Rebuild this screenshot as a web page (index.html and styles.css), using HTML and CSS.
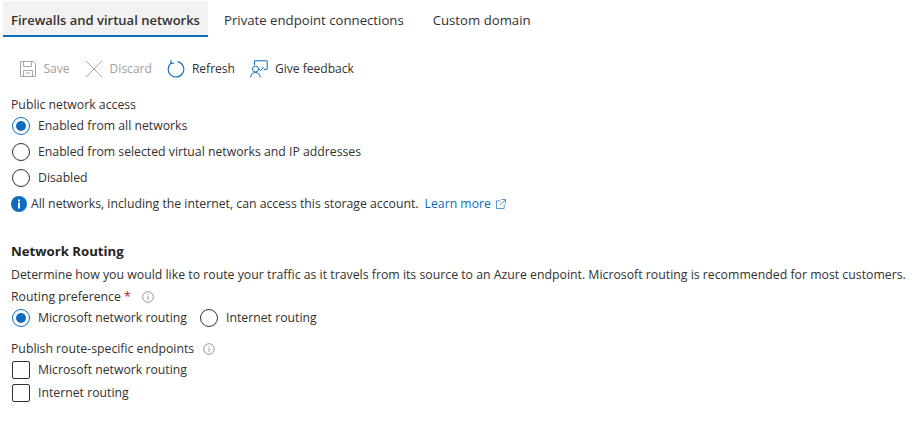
FILE: index.html
```html
<!DOCTYPE html>
<html lang="en">
<head>
<meta charset="utf-8">
<title>Networking</title>
<link rel="stylesheet" href="styles.css">
</head>
<body>
<nav class="tabs">
  <a class="tab active">Firewalls and virtual networks</a>
  <a class="tab">Private endpoint connections</a>
  <a class="tab">Custom domain</a>
</nav>
<div class="toolbar">
  <span class="tool disabled">
    <svg class="tool-icon" viewBox="0 0 18 18" fill="none" stroke="#a6a6a6" stroke-width="1"><path d="M1.500 1.500h13l2 2v13h-15z"/><path d="M4.500 1.500v5h8v-5M4.500 16.500v-6h9v6M7 13h4"/></svg>
    <span>Save</span>
  </span>
  <span class="tool disabled">
    <svg class="tool-icon" viewBox="0 0 18 18" fill="none" stroke="#a6a6a6" stroke-width="1"><path d="M1 1l16 16M17 1L1 17"/></svg>
    <span>Discard</span>
  </span>
  <span class="tool">
    <svg class="tool-icon" viewBox="0 0 18 18" fill="none" stroke="#0f6cbd" stroke-width="1.100"><path d="M4.800 2.600A7.800 7.800 0 1 0 10.800 1.600"/><path d="M4 0v3.300h3.300"/></svg>
    <span>Refresh</span>
  </span>
  <span class="tool">
    <svg class="tool-icon" viewBox="0 0 18 18" fill="none" stroke="#0f6cbd" stroke-width="1"><path d="M4.500 5V.8h12.700v8.600h-3.500"/><path d="M9 9l1.800 1.500 2.700-3.500"/><circle cx="5.500" cy="9" r="3"/><path d="M.8 17.500c0-3.200 2-5 4.700-5s4.700 1.800 4.700 5"/></svg>
    <span>Give feedback</span>
  </span>
</div>
<section class="form-group">
  <div class="label">Public network access</div>
  <label class="option"><span class="radio checked"></span><span>Enabled from all networks</span></label>
  <label class="option"><span class="radio"></span><span>Enabled from selected virtual networks and IP addresses</span></label>
  <label class="option"><span class="radio"></span><span>Disabled</span></label>
  <div class="info">
    <svg class="info-icon" viewBox="0 0 16 16"><circle cx="8" cy="8" r="8" fill="#0f6cbd"/><rect x="7" y="6.500" width="2" height="6" fill="#fff"/><rect x="7" y="3.500" width="2" height="2" fill="#fff"/></svg>
    <span>All networks, including the internet, can access this storage account.</span>
    <a class="link"><span>Learn more</span><svg class="ext-icon" viewBox="0 0 10 10" fill="none" stroke="#0f6cbd" stroke-width=".7"><path d="M4.500 1.800H.5v7.700h7.700V5.500M5.500.5h4v4M9.500.5L4 6"/></svg></a>
  </div>
</section>
<section class="routing">
  <h2>Network Routing</h2>
  <p>Determine how you would like to route your traffic as it travels from its source to an Azure endpoint. Microsoft routing is recommended for most customers.</p>
  <div class="label pref">Routing preference <span class="req">*</span>
    <svg class="help" viewBox="0 0 12 12" fill="none" stroke="#6f6f6f" stroke-width=".7"><circle cx="6" cy="6" r="5.300"/><path d="M6 5.200v3.600M6 3.200v1"/></svg>
  </div>
  <div class="inline">
    <label class="option"><span class="radio checked"></span><span>Microsoft network routing</span></label>
    <label class="option"><span class="radio"></span><span>Internet routing</span></label>
  </div>
  <div class="label publish">Publish route-specific endpoints
    <svg class="help" viewBox="0 0 12 12" fill="none" stroke="#6f6f6f" stroke-width=".7"><circle cx="6" cy="6" r="5.300"/><path d="M6 5.200v3.600M6 3.200v1"/></svg>
  </div>
  <label class="check"><span class="box"></span><span>Microsoft network routing</span></label>
  <label class="check"><span class="box"></span><span>Internet routing</span></label>
</section>
</body>
</html>
```
FILE: styles.css
```css
* { box-sizing: border-box; }
html, body { margin: 0; }
body {
  width: 920px;
  height: 421px;
  overflow: hidden;
  background: #fff;
  color: #323130;
  font: 12.250px/18px "Open Sans", "Noto Sans", sans-serif;
  padding: 1px 0 0 3px;
}
.tabs { display: flex; height: 36px; }
.tab {
  display: flex;
  align-items: center;
  padding: 2px 13px 0 16px;
  height: 36px;
  color: #323130;
  font-size: 13.200px;
}
.tab.active {
  background: #f3f2f1;
  border-bottom: 2px solid #106ebe;
  padding: 6px 8px 2px;
  width: 205px;
  font-size: 13px;
  font-weight: 600;
  white-space: nowrap;
}
.tool span { white-space: nowrap; }
.toolbar {
  display: flex;
  align-items: center;
  height: 22px;
  margin-top: 21px;
  padding-left: 16px;
  gap: 15.500px;
  font-size: 12.050px;
}
.tool { display: flex; align-items: center; gap: 6.500px; }
.tool.disabled { color: #a19f9d; }
.tool-icon { width: 18px; height: 18px; flex: none; }
.form-group { margin: 16px 0 0 8px; }
.label { height: 18px; line-height: 18px; }
.option { display: flex; align-items: center; gap: 8px; height: 26px; }
.form-group .label { margin-bottom: -1px; }
.radio {
  width: 18px;
  height: 18px;
  margin-left: 1px;
  border: 1px solid #323130;
  border-radius: 50%;
  flex: none;
  position: relative;
}
.radio.checked { border-color: #0f6cbd; }
.radio.checked::after {
  content: "";
  position: absolute;
  inset: 3px;
  border-radius: 50%;
  background: #0f6cbd;
}
.info { display: flex; align-items: center; gap: 4px; height: 26px; white-space: nowrap; }
.info-icon { width: 16px; height: 16px; flex: none; }
.link { display: flex; align-items: center; gap: 5px; color: #0f6cbd; margin-left: 2px; }
.ext-icon { width: 10px; height: 10px; flex: none; }
.routing { margin: 24px 0 0 8px; }
h2 { margin: 0; font-size: 13.200px; line-height: 20px; font-weight: 700; color: #252423; }
p { margin: 5px 0 0; height: 18px; line-height: 18px; white-space: nowrap; font-size: 12.300px; }
.pref { margin-top: 4px; }
.req { color: #c50f1f; }
.help { width: 12px; height: 12px; margin-left: 5px; vertical-align: -2px; }
.pref .help { margin-left: 8px; }
.publish .help { margin-left: 6px; }
.inline { display: flex; gap: 12px; height: 26px; margin-top: -1px; }
.publish { margin-top: 9px; }
.check { display: flex; align-items: center; gap: 8px; height: 23px; }
.box { width: 18px; height: 18px; margin-left: 1px; border: 1px solid #323130; border-radius: 2px; flex: none; }
```
